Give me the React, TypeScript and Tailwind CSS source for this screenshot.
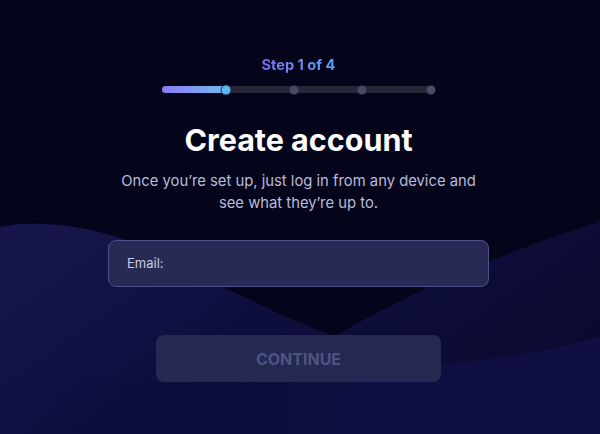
import React from "react";

const font = { fontFamily: "Inter, 'Noto Sans', sans-serif" };

function Waves() {
  return (
    <svg className="absolute inset-0 h-full w-full" viewBox="0 0 600 434" preserveAspectRatio="none">
      <defs>
        <linearGradient id="back" x1="0" y1="0" x2="1" y2="0.5">
          <stop offset="0" stopColor="#17174d" />
          <stop offset="0.45" stopColor="#0f0f40" />
          <stop offset="1" stopColor="#0a0a31" />
        </linearGradient>
        <linearGradient id="front" x1="0" y1="0" x2="1" y2="0">
          <stop offset="0" stopColor="#0e0e3d" stopOpacity="0" />
          <stop offset="0.5" stopColor="#0e0e3f" />
          <stop offset="1" stopColor="#0f0f44" />
        </linearGradient>
      </defs>
      <path d="M0 227 C 30 220, 80 224, 120 238 C 180 262, 260 310, 335 336 C 380 310, 470 262, 600 222 V434 H0 Z" fill="url(#back)" />
      <path d="M0 380 C 180 378, 340 372, 440 364 C 510 359, 560 348, 600 337 V434 H0 Z" fill="url(#front)" />
    </svg>
  );
}

function Progress() {
  const dots = [64, 132, 200, 269];
  return (
    <div className="relative h-[7px] w-[273px] rounded-full bg-[#262639]">
      <div className="h-full w-[66px] rounded-full bg-gradient-to-r from-[#8b78f4] to-[#6cbcef]" />
      {dots.map((left, i) =>
        i === 0 ? (
          <span
            key={left}
            className="absolute top-1/2 h-[11px] w-[11px] -translate-x-1/2 -translate-y-1/2 rounded-full border-[1.5px] border-[#1d2a4a] bg-[#5db8ee]"
            style={{ left }}
          />
        ) : (
          <span
            key={left}
            className="absolute top-1/2 h-[9px] w-[9px] -translate-x-1/2 -translate-y-1/2 rounded-full bg-[#4a4a68]"
            style={{ left }}
          />
        )
      )}
    </div>
  );
}

export default function App() {
  return (
    <div className="relative h-[434px] w-full overflow-hidden bg-[#04041a]" style={font}>
      <Waves />
      <div className="relative flex flex-col items-center pt-[56px] pr-[3px]">
        <p className="bg-gradient-to-r from-[#7b6ff0] to-[#58a6f2] bg-clip-text text-[14.6px] font-bold leading-[18px] text-transparent">
          Step 1 of 4
        </p>
        <div className="mt-[12px]">
          <Progress />
        </div>
        <h1 className="mt-[29px] text-[30.5px] font-bold leading-[36px] text-white">Create account</h1>
        <p className="mt-[12px] w-[380px] text-center text-[14.8px] leading-[22px] text-[#b9bcd9]">
          Once you’re set up, just log in from any device and see what they’re up to.
        </p>
        <div className="mt-[26px] flex h-[47px] w-[381px] items-center rounded-[8px] border border-[#4b5086] bg-[#272b53] px-[18px]">
          <span className="text-[13px] text-[#c8cbe9]">Email:</span>
        </div>
        <button className="mt-[48px] flex h-[47px] w-[285px] items-center justify-center rounded-[8px] bg-[#252850] text-[16px] font-bold text-[#4f5482]">
          CONTINUE
        </button>
      </div>
    </div>
  );
}
